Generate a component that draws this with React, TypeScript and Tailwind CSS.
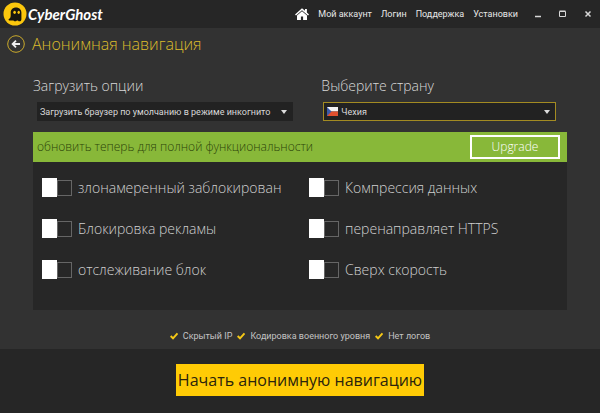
import { useState } from "react";

const NAV_LINKS = ["Мой аккаунт", "Логин", "Поддержка", "Установки"];

const FEATURES = [
  "злонамеренный заблокирован",
  "Компрессия данных",
  "Блокировка рекламы",
  "перенаправляет HTTPS",
  "отслеживание блок",
  "Сверх скорость",
];

const BENEFITS = ["Скрытый IP", "Кодировка военного уровня", "Нет логов"];

function GhostLogo() {
  return (
    <svg viewBox="0 0 24 24" className="size-6" aria-hidden="true">
      <circle cx="12" cy="12" r="11.5" fill="#fbc70d" />
      <path
        d="M7 18.6C6 18.600 5.400 18 5.600 17.300c1.600-.8 2.100-2.100 2.100-4V10.600C7.700 7.600 9.800 5.400 13 5.400s5.400 2.200 5.400 5.200v6.400c0 1.600-.8 2.500-2.200 2.300-.8-.1-1.200-.8-1.900-.8s-1.100.8-2.100.8-1.500-.8-2.400-.8-1.800.1-2.800.1Z"
        fill="#17150e"
      />
      <ellipse cx="11.600" cy="10.300" rx="1.300" ry="1.600" fill="#fbc70d" />
      <ellipse cx="15.700" cy="10.300" rx="1.200" ry="1.600" fill="#fbc70d" />
    </svg>
  );
}

function HomeIcon() {
  return (
    <svg viewBox="0 0 14 12" className="h-3 w-3.5" fill="#fff" aria-hidden="true">
      <path d="M7 .2 0 6.400l1 1.100L7 2.300l6 5.200 1-1.100-2.100-1.900V.9H10v1.900Z" />
      <path d="M7 3.200 2 7.500V12h3.900V8.600h2.200V12H12V7.500Z" />
    </svg>
  );
}

function CheckIcon() {
  return (
    <svg viewBox="0 0 8 8" className="size-2" fill="none" stroke="#f5c816" strokeWidth="2" aria-hidden="true">
      <path d="M.6 4 3 6.300 7.500 1.300" />
    </svg>
  );
}

function CzechFlag() {
  return (
    <svg viewBox="0 0 11 9" className="h-[9px] w-[11px]" aria-hidden="true">
      <rect width="11" height="4.500" fill="#f4f4f4" />
      <rect y="4.500" width="11" height="4.500" fill="#e0502f" />
      <path d="M0 0 4.500 4.500 0 9Z" fill="#3a5aa8" />
    </svg>
  );
}

function Caret() {
  return (
    <svg viewBox="0 0 6 4" className="pointer-events-none absolute top-2 right-1.5 h-1 w-1.5" fill="#ddd" aria-hidden="true">
      <path d="M0 0h6L3 4Z" />
    </svg>
  );
}

function Toggle({ label }: { label: string }) {
  const [on, setOn] = useState(false);

  return (
    <label className="relative flex h-[21px] cursor-pointer items-center gap-1.5 pl-[9px]">
      <input
        type="checkbox"
        className="sr-only"
        checked={on}
        onChange={(e) => setOn(e.target.checked)}
      />
      <span className={`flex h-[19px] w-[30px] shrink-0 items-center ${on ? "flex-row-reverse" : ""}`}>
        <span className="h-[19px] w-[15px] bg-white" />
        <span className={`h-4 w-[15px] border border-[#666] ${on ? "bg-[#88b839]" : ""}`} />
      </span>
      <span className="text-sm leading-5 font-light whitespace-nowrap text-[#d0d0d0]">{label}</span>
    </label>
  );
}

export default function App() {
  return (
    <div className="flex min-h-screen flex-col bg-[#323232] font-['Open_Sans','Noto_Sans',sans-serif] text-[#d8d8d8]">
      <header className="flex h-7 items-center justify-between bg-[#262626] pr-2 pl-[3px]">
        <div className="flex items-center gap-px">
          <GhostLogo />
          <span className="font-[Lato,sans-serif] text-[15px] leading-6 font-bold text-white italic">
            CyberGhost
          </span>
        </div>
        <div className="flex items-center">
          <nav className="flex items-center font-[Roboto,sans-serif] text-[9px] leading-4 text-[#e8e8e8]">
            <a href="#home" aria-label="Home">
              <HomeIcon />
            </a>
            {NAV_LINKS.map((link) => (
              <a key={link} href="#" className="pl-[9px]">
                {link}
              </a>
            ))}
          </nav>
          <div className="ml-4 flex items-center gap-[17px] text-[#d8d8d8]">
            <button type="button" aria-label="Minimize">
              <svg viewBox="0 0 8 8" className="size-2" stroke="currentColor" strokeWidth="1.500">
                <path d="M1 6.500h6" />
              </svg>
            </button>
            <button type="button" aria-label="Maximize">
              <svg viewBox="0 0 8 8" className="size-2" fill="none" stroke="currentColor">
                <path d="M.5 1.500h6v5h-6ZM.5 1h6" />
              </svg>
            </button>
            <button type="button" aria-label="Close">
              <svg viewBox="0 0 8 8" className="size-2" stroke="currentColor" strokeWidth="1.500">
                <path d="m1.500 1.500 5 5m0-5-5 5" />
              </svg>
            </button>
          </div>
        </div>
      </header>

      <div className="flex h-8 items-center gap-[7px] pl-[7px]">
        <button type="button" aria-label="Back">
          <svg viewBox="0 0 18 18" className="size-[18px]" fill="none" aria-hidden="true">
            <circle cx="9" cy="9" r="8.300" stroke="#c9a92c" />
            <path d="M13 9H5.800M9 5.600 5.600 9 9 12.400" stroke="#eee" strokeWidth="1.800" />
          </svg>
        </button>
        <h1 className="text-base leading-6 font-light text-[#dcbc2c]">Анонимная навигация</h1>
      </div>

      <main className="px-[33px] pt-4">
        <div className="flex">
          <div className="w-[54%]">
            <label htmlFor="options" className="block text-sm leading-5 font-light">
              Загрузить опции
            </label>
            <div className="relative mt-1.5 ml-1 w-64">
              <select
                id="options"
                className="block h-[19px] w-full appearance-none bg-[#222] pl-[3px] font-[Roboto,sans-serif] text-[9px] leading-4"
              >
                <option>Загрузить браузер по умолчанию в режиме инкогнито</option>
              </select>
              <Caret />
            </div>
          </div>
          <div className="flex-1 pr-[11px]">
            <label htmlFor="country" className="block text-sm leading-5 font-light">
              Выберите страну
            </label>
            <div className="relative mt-1.5 ml-0.5">
              <select
                id="country"
                className="block h-[19px] w-full appearance-none border border-[#a38b22] bg-[#222] pl-[17px] font-[Roboto,sans-serif] text-[9px] leading-4"
              >
                <option>Чехия</option>
              </select>
              <span className="pointer-events-none absolute top-[5px] left-1">
                <CzechFlag />
              </span>
              <Caret />
            </div>
          </div>
        </div>

        <section className="mt-[11px] bg-[#272727]">
          <div className="flex h-[30px] items-center justify-between bg-[#88b839] pr-[7px] pl-1">
            <p className="text-xs leading-5 font-light text-[#2c4409]">
              обновить теперь для полной функциональности
            </p>
            <button
              type="button"
              className="h-6 w-[90px] border-2 border-white text-xs leading-5 font-light text-white"
            >
              Upgrade
            </button>
          </div>
          <div className="grid grid-cols-2 gap-y-5 pt-[15px] pb-[30px]">
            {FEATURES.map((feature) => (
              <Toggle key={feature} label={feature} />
            ))}
          </div>
        </section>
      </main>

      <ul className="flex h-[39px] items-center justify-center gap-[5px] pt-3 font-[Roboto,sans-serif] text-[9px] leading-4 text-[#c4c4c4]">
        {BENEFITS.map((benefit) => (
          <li key={benefit} className="flex items-center gap-[5px]">
            <CheckIcon />
            {benefit}
          </li>
        ))}
      </ul>

      <footer className="flex flex-1 items-start justify-center bg-[#262626] pt-[15px] pb-[17px]">
        <button type="button" className="h-8 bg-[#ffcb05] px-0.5 text-base leading-6 text-[#2b240c]">
          Начать анонимную навигацию
        </button>
      </footer>
    </div>
  );
}
